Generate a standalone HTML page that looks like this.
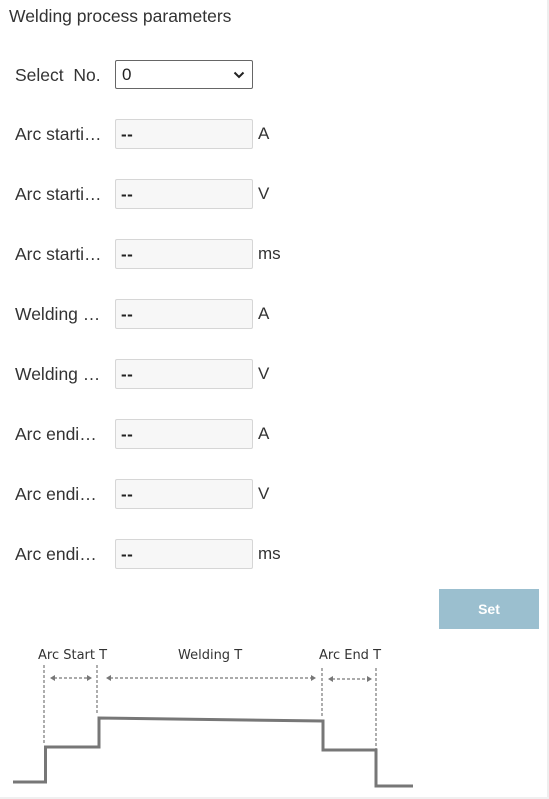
<!DOCTYPE html>
<html><head><style>
body{margin:0;width:549px;height:799px;background:#fff;font-family:"Liberation Sans",sans-serif;color:#222;position:relative;overflow:hidden}
.edge{position:absolute;right:0;top:0;width:2px;height:799px;background:#eee}
.bedge{position:absolute;left:0;bottom:0;width:549px;height:2px;background:#f0f0f0}
.title{position:absolute;left:9px;top:6px;font-size:17.5px;color:#333}
.row{position:absolute;left:15px;height:30px;width:400px}
.lbl{position:absolute;left:0;top:5px;font-size:17.5px;color:#333}
.inp{position:absolute;left:100px;top:0;width:136px;height:28px;border:1px solid #d6d6d6;background:#f7f7f7;border-radius:2px;box-sizing:content-box}
.inp span{position:absolute;left:5px;top:5px;font-size:17px;color:#222;font-weight:bold;letter-spacing:0.5px}
.unit{position:absolute;left:243px;top:5px;font-size:17px;color:#333}
.sel{position:absolute;left:100px;top:0;width:136px;height:27px;border:1px solid #666;border-radius:2px;background:#fff}
.sel span{position:absolute;left:6px;top:4px;font-size:17px}
.btn{position:absolute;left:439px;top:589px;width:100px;height:40px;background:#9bbfcf;color:#fff;font-weight:bold;font-size:14px;text-align:center;line-height:40px}
</style></head><body>
<div class="edge"></div><div class="bedge"></div>
<div class="title">Welding process parameters</div>
<div class="row" style="top:60px"><div class="lbl">Select&nbsp; No.</div><div class="sel"><span>0</span>
<svg style="position:absolute;left:117px;top:10px" width="12" height="8" viewBox="0 0 12 8"><path d="M1.5 1.5 6 6 10.5 1.5" fill="none" stroke="#222" stroke-width="2"/></svg></div></div>
<div class="row" style="top:119px"><div class="lbl">Arc starti…</div><div class="inp"><span>--</span></div><div class="unit">A</div></div>
<div class="row" style="top:179px"><div class="lbl">Arc starti…</div><div class="inp"><span>--</span></div><div class="unit">V</div></div>
<div class="row" style="top:239px"><div class="lbl">Arc starti…</div><div class="inp"><span>--</span></div><div class="unit">ms</div></div>
<div class="row" style="top:299px"><div class="lbl">Welding …</div><div class="inp"><span>--</span></div><div class="unit">A</div></div>
<div class="row" style="top:359px"><div class="lbl">Welding …</div><div class="inp"><span>--</span></div><div class="unit">V</div></div>
<div class="row" style="top:419px"><div class="lbl">Arc endi…</div><div class="inp"><span>--</span></div><div class="unit">A</div></div>
<div class="row" style="top:479px"><div class="lbl">Arc endi…</div><div class="inp"><span>--</span></div><div class="unit">V</div></div>
<div class="row" style="top:539px"><div class="lbl">Arc endi…</div><div class="inp"><span>--</span></div><div class="unit">ms</div></div>
<div class="btn">Set</div>
<svg style="position:absolute;left:0;top:0" width="549" height="799">
<g font-family="DejaVu Sans, sans-serif" font-size="13" fill="#333">
<text x="38" y="659">Arc Start T</text>
<text x="178" y="659">Welding T</text>
<text x="319" y="659">Arc End T</text>
</g>
<g stroke="#777" stroke-width="1.2" stroke-dasharray="3,2" fill="none">
<line x1="44" y1="665" x2="44" y2="745"/>
<line x1="97" y1="665" x2="97" y2="713"/>
<line x1="322" y1="668" x2="322" y2="718"/>
<line x1="376" y1="668" x2="376" y2="750"/>
<line x1="54" y1="678" x2="88" y2="678"/>
<line x1="110" y1="678" x2="312" y2="678"/>
<line x1="332" y1="679" x2="368" y2="679"/>
</g>
<g fill="#777">
<path d="M50 678 55 675 55 681Z"/><path d="M92 678 87 675 87 681Z"/>
<path d="M106 678 111 675 111 681Z"/><path d="M316 678 311 675 311 681Z"/>
<path d="M328 679 333 676 333 682Z"/><path d="M372 679 367 676 367 682Z"/>
</g>
<path d="M13 782H45.5V747H99V718L323 721V750H376V786H413" fill="none" stroke="#777" stroke-width="3"/>
</svg>
</body></html>
